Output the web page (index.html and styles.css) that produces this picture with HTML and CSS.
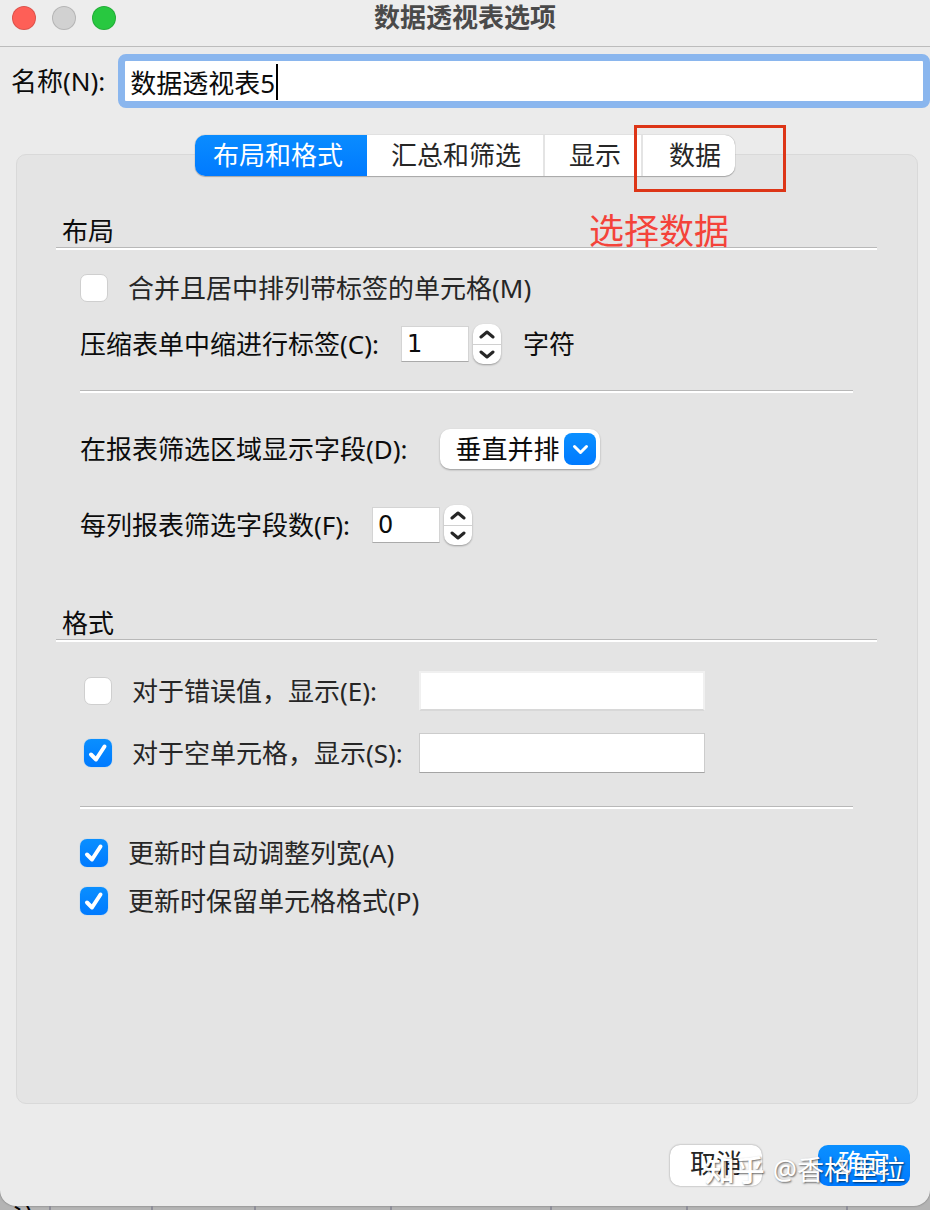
FILE: index.html
```html
<!DOCTYPE html>
<html lang="zh-CN">
<head>
<meta charset="utf-8">
<meta name="viewport" content="width=device-width, initial-scale=1">
<title>数据透视表选项</title>
<link rel="stylesheet" href="styles.css">
</head>
<body>
<main class="dialog">
  <header class="titlebar">
    <div class="lights">
      <button class="light light-close" type="button" aria-label="关闭"></button>
      <button class="light light-min" type="button" aria-label="最小化" disabled></button>
      <button class="light light-zoom" type="button" aria-label="缩放"></button>
    </div>
    <h1 class="title">数据透视表选项</h1>
  </header>

  <div class="name-row">
    <label for="name">名称(N):</label>
    <div class="name-field">
      <input id="name" class="name-input" type="text" value="数据透视表5">
      <span class="caret"></span>
    </div>
  </div>

  <nav class="tabs">
    <button class="tab tab-active" type="button">布局和格式</button>
    <button class="tab" type="button">汇总和筛选</button>
    <button class="tab tab-show" type="button">显示</button>
    <button class="tab tab-data" type="button">数据<span class="marker"></span></button>
  </nav>

  <section class="panel">
    <h2 class="heading">布局<span class="note">选择数据</span></h2>
    <div class="group">
      <div class="row row-first">
        <input id="merge" class="check" type="checkbox">
        <label class="soft" for="merge">合并且居中排列带标签的单元格(M)</label>
      </div>
      <div class="row row-near">
        <label for="indent">压缩表单中缩进行标签(C):</label>
        <div class="stepper">
          <input id="indent" class="number" type="text" value="1">
          <div class="arrows">
            <button class="arrow" type="button" aria-label="增加"><svg viewBox="0 0 16 10"><path d="M2 8 8 3l6 5"/></svg></button>
            <button class="arrow" type="button" aria-label="减少"><svg viewBox="0 0 16 10"><path d="M2 2l6 5 6-5"/></svg></button>
          </div>
        </div>
        <span>字符</span>
      </div>
      <hr class="rule">
      <div class="row row-far">
        <label for="order">在报表筛选区域显示字段(D):</label>
        <div class="popup">
          <select id="order" class="select"><option>垂直并排</option><option>水平并排</option></select>
          <span class="popup-icon"><svg viewBox="0 0 32 32"><path d="M10.500 13.500 16.500 19.500 22.500 13.500"/></svg></span>
        </div>
      </div>
      <div class="row row-mid">
        <label for="count">每列报表筛选字段数(F):</label>
        <div class="stepper">
          <input id="count" class="number" type="text" value="0">
          <div class="arrows">
            <button class="arrow" type="button" aria-label="增加"><svg viewBox="0 0 16 10"><path d="M2 8 8 3l6 5"/></svg></button>
            <button class="arrow" type="button" aria-label="减少"><svg viewBox="0 0 16 10"><path d="M2 2l6 5 6-5"/></svg></button>
          </div>
        </div>
      </div>
    </div>

    <h2 class="heading heading-next">格式</h2>
    <div class="group">
      <div class="values">
        <div class="pick">
          <input id="err" class="check" type="checkbox">
          <label class="soft" for="err">对于错误值，显示(E):</label>
        </div>
        <input class="field field-off" type="text" aria-label="错误值显示" disabled>
        <div class="pick">
          <input id="blank" class="check" type="checkbox" checked>
          <label class="soft" for="blank">对于空单元格，显示(S):</label>
        </div>
        <input class="field" type="text" aria-label="空单元格显示">
      </div>
      <hr class="rule rule-low">
      <div class="row row-last">
        <input id="auto" class="check" type="checkbox" checked>
        <label class="soft" for="auto">更新时自动调整列宽(A)</label>
      </div>
      <div class="row">
        <input id="keep" class="check" type="checkbox" checked>
        <label class="soft" for="keep">更新时保留单元格格式(P)</label>
      </div>
    </div>
  </section>

  <footer class="actions">
    <button class="button" type="button">取消</button>
    <button class="button button-ok" type="button">确定</button>
    <p class="credit"><span class="credit-site">知乎</span><span>@香格里拉</span></p>
  </footer>
</main>
<div class="sheet"><span class="cell cell-text">注</span><span class="cell"></span><span class="cell"></span><span class="cell cell-wide"></span><span class="cell cell-wider"></span><span class="cell cell-wide"></span><span class="cell cell-wider"></span><span class="cell cell-end"></span></div>
</body>
</html>
```
FILE: styles.css
```css
* { box-sizing: border-box; }

body {
  margin: 0;
  min-height: 100vh;
  display: flex;
  flex-direction: column;
  background: #b4b4b4;
  color: #0c0c0c;
  font: 26px/32px "Noto Sans", "Noto Sans CJK SC", sans-serif;
}

button, input, select { font: inherit; color: inherit; margin: 0; }
button { padding: 0; border: 0; }

.dialog {
  flex: 1;
  display: flex;
  flex-direction: column;
  background: #ebebeb;
  border-radius: 0 0 16px 16px;
  box-shadow: 0 0 2px #666;
}

.titlebar {
  position: relative;
  display: flex;
  align-items: center;
  justify-content: center;
  height: 47px;
  padding-bottom: 12px;
  background: #ededed;
  border-bottom: 1px solid #bcbcbc;
}
.lights { position: absolute; left: 12px; top: 6px; display: flex; gap: 16px; }
.light { width: 24px; height: 24px; border-radius: 50%; border: 1px solid #0002; }
.light-close { background: #fe5f57; }
.light-min { background: #d1d1d1; }
.light-zoom { background: #28c840; }
.title { margin: 0; font-size: 26px; font-weight: 700; color: #4a4a4a; }

.name-row { display: flex; align-items: center; gap: 13px; padding: 7px 0 0 11px; }
.name-field { position: relative; flex: 1; }
.name-input {
  display: block;
  width: 100%;
  height: 54px;
  padding: 2px 5px 0;
  border: 7px solid #8ab6ee;
  border-radius: 8px;
  background: #fff;
  outline: 0;
}
.caret { position: absolute; left: 158px; top: 10px; width: 2px; height: 36px; background: #000; }

.tabs {
  position: relative;
  z-index: 1;
  align-self: center;
  display: flex;
  height: 41px;
  margin: 27px 0 -22px;
  border-radius: 10px;
  background: #fff;
  box-shadow: 0 0 1px #888, 0 1px 1px #aaa;
}
.tab { position: relative; padding: 0 22px 2px; background: none; color: #262626; border-left: 2px solid #e4e4e4; }
.tab-active {
  padding: 0 24px 2px 18px;
  border: 0;
  border-radius: 10px 0 0 10px;
  background: linear-gradient(#0a8cff, #007aff);
  color: #fff;
}
.tab-active + .tab { border-color: #fff; }
.tab-show { padding: 0 20px 2px 24px; }
.tab-data { padding: 0 14px 2px 26px; }
.marker { position: absolute; left: -9px; top: -10px; width: 152px; height: 67px; border: 3px solid #dd3517; }

.panel {
  flex: 1;
  margin: 0 12px 0 16px;
  padding: 60px 40px 0 39px;
  background: #e4e4e4;
  border: 1px solid #d9d9d9;
  border-radius: 10px;
}
.heading {
  position: relative;
  margin: 0;
  padding-left: 6px;
  font-size: 26px;
  font-weight: 400;
  height: 35px;
  border-bottom: 2px solid #fff;
  box-shadow: inset 0 -1px #b8b8b8;
}
.heading-next { margin-top: 58px; }
.note { position: absolute; left: 533px; top: 0; font-size: 35px; color: #f4433a; }
.group { padding: 0 24px; }
.row { display: flex; align-items: center; gap: 20px; height: 48px; }
.row-first { margin-top: 14px; }
.row-near { margin-top: 8px; gap: 22px; }
.row-far { margin-top: 32px; gap: 32px; }
.row-mid { margin-top: 28px; gap: 22px; }
.row-last { margin-top: 20px; }
.soft { color: #262626; }

.rule { height: 3px; margin: 22px 0 0; border: 0; border-top: 1px solid #b8b8b8; background: #fff; }
.rule-low { margin-top: 29px; }

.check {
  appearance: none;
  flex: none;
  width: 28px;
  height: 28px;
  border-radius: 7px;
  background: #fff;
  border: 1px solid #cfcfcf;
  display: grid;
  place-items: center;
}
.check:checked { border: 0; background: linear-gradient(#0a8fff, #007aff); box-shadow: 0 0 1px #58b0ff; }
.check:checked::before {
  content: "";
  width: 22px;
  height: 22px;
  background: url("data:image/svg+xml,%3Csvg xmlns='http://www.w3.org/2000/svg' viewBox='0 0 22 22'%3E%3Cpath d='M4 12.500 9 17.500 17.500 4.500' fill='none' stroke='white' stroke-width='4' stroke-linecap='round' stroke-linejoin='round'/%3E%3C/svg%3E");
}

.stepper { display: flex; align-items: center; gap: 4px; }
.number { width: 68px; height: 36px; padding: 0 5px; background: #fff; border: 1px solid #d4d4d4; border-bottom-color: #aaa; font-family: "DejaVu Sans", sans-serif; font-size: 24px; }
.arrows { width: 28px; border-radius: 10px; background: #fff; box-shadow: 0 1px 2px #0005; }
.arrow { display: flex; align-items: center; justify-content: center; width: 100%; height: 20px; background: none; }
.arrow + .arrow { border-top: 1px solid #d0d0d0; }
.arrow svg { width: 16px; height: 10px; fill: none; stroke: #262626; stroke-width: 3; stroke-linecap: round; stroke-linejoin: round; }

.popup { position: relative; }
.select {
  appearance: none;
  display: block;
  width: 160px;
  height: 40px;
  padding: 0 0 0 16px;
  border: 0;
  border-radius: 10px;
  background: #fff;
  box-shadow: 0 1px 2px #0005;
}
.popup-icon { position: absolute; right: 4px; top: 4px; width: 32px; height: 32px; border-radius: 8px; background: linear-gradient(#0a8fff, #007aff); pointer-events: none; }
.popup-icon svg { display: block; fill: none; stroke: #fff; stroke-width: 3; stroke-linecap: round; stroke-linejoin: round; }

.values { display: grid; grid-template-columns: 320px 286px; column-gap: 19px; row-gap: 14px; align-items: center; padding-top: 25px; }
.pick { display: flex; align-items: center; gap: 20px; height: 48px; padding-left: 4px; white-space: nowrap; }
.field { width: 100%; height: 40px; padding: 0 6px; background: #fff; border: 1px solid #ccc; border-bottom-color: #a4a4a4; }
.field-off { border: 2px solid #f0f0f0; border-bottom-color: #d8d8d8; }

.actions { position: relative; display: flex; justify-content: flex-end; gap: 56px; padding: 41px 20px 20px; }
.button { width: 92px; height: 41px; padding-bottom: 6px; border-radius: 10px; background: #fff; color: #262626; box-shadow: 0 0 2px #0006; }
.button-ok { background: linear-gradient(#0a8fff, #007aff); color: #fff; box-shadow: none; }
.credit { position: absolute; right: 25px; bottom: 20px; display: flex; align-items: center; gap: 8px; margin: 0; font-size: 27px; color: #fff; text-shadow: 1px 1px 2px #0009; white-space: nowrap; pointer-events: none; }
.credit-site { font-size: 30px; font-weight: 500; }

.sheet { display: flex; height: 4px; overflow: hidden; }
.cell { flex: 103; border-right: 2px solid #8e8e98; }
.cell-text { flex: 38; padding-left: 12px; line-height: 24px; color: #000; }
.cell-wide { flex: 138; }
.cell-wider { flex: 162; }
.cell-end { flex: 84; border: 0; }
```
